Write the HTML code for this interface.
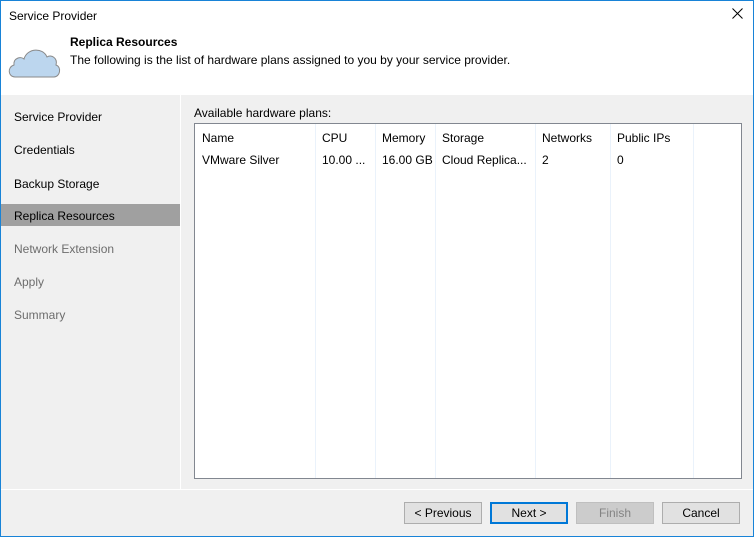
<!DOCTYPE html>
<html><head><style>
body{margin:0;width:754px;height:537px;overflow:hidden;font-family:"Liberation Sans",sans-serif;font-size:12px;color:#000;}
.win{position:absolute;left:0;top:0;width:752px;height:535px;border:1px solid #1883d7;background:#f0f0f0;}
.abs{position:absolute;}
.nav{position:absolute;left:13px;font-size:12px;}
.btn{position:absolute;top:501px;height:20px;width:76px;border:1px solid #adadad;background:#e1e1e1;text-align:center;line-height:20px;font-size:12px;}
.col{position:absolute;top:123px;width:1px;height:354px;background:#eaf2fb;}
.th{position:absolute;top:130px;}
.td{position:absolute;top:152px;}
</style></head><body>
<div class="win">
<div class="abs" style="left:0;top:0;width:752px;height:94px;background:#fff"></div>
<div class="abs" style="left:8px;top:8px;">Service Provider</div>
<svg class="abs" style="left:731px;top:7px" width="11" height="11" viewBox="0 0 11 11"><path d="M0.5 0.5L10.5 10.5M10.5 0.5L0.5 10.5" stroke="#000" stroke-width="1"/></svg>
<svg class="abs" style="left:6px;top:44px" width="54" height="34" viewBox="0 0 54 34"><path d="M8 32 C1 32 0 22 7 20 C6 13 14 11 17 14 C20 3 36 2 40 12 C44 9 51 13 49 20 C55 22 53 32 47 32 Z" fill="#bcd6ee" stroke="#8a8a8a" stroke-width="1"/></svg>
<div class="abs" style="left:69px;top:34px;font-weight:bold;">Replica Resources</div>
<div class="abs" style="left:69px;top:52px;">The following is the list of hardware plans assigned to you by your service provider.</div>
<div class="abs" style="left:179px;top:94px;width:1px;height:394px;background:#fff"></div>
<div class="abs" style="left:0;top:203px;width:179px;height:22px;background:#a0a0a0"></div>
<div class="nav" style="top:109px">Service Provider</div>
<div class="nav" style="top:142px">Credentials</div>
<div class="nav" style="top:176px">Backup Storage</div>
<div class="nav" style="top:208px">Replica Resources</div>
<div class="nav" style="top:241px;color:#6d6d6d">Network Extension</div>
<div class="nav" style="top:274px;color:#6d6d6d">Apply</div>
<div class="nav" style="top:307px;color:#6d6d6d">Summary</div>
<div class="abs" style="left:193px;top:105px;">Available hardware plans:</div>
<div class="abs" style="left:193px;top:122px;width:546px;height:354px;background:#fff;border:1px solid #828790;"></div>
<div class="col" style="left:314px"></div><div class="col" style="left:374px"></div><div class="col" style="left:434px"></div><div class="col" style="left:534px"></div><div class="col" style="left:609px"></div><div class="col" style="left:692px"></div>
<div class="th" style="left:201px">Name</div><div class="th" style="left:321px">CPU</div><div class="th" style="left:381px">Memory</div><div class="th" style="left:441px">Storage</div><div class="th" style="left:541px">Networks</div><div class="th" style="left:616px">Public IPs</div>
<div class="td" style="left:201px">VMware Silver</div><div class="td" style="left:321px">10.00 ...</div><div class="td" style="left:381px">16.00 GB</div><div class="td" style="left:441px">Cloud Replica...</div><div class="td" style="left:541px">2</div><div class="td" style="left:616px">0</div>
<div class="abs" style="left:0;top:488px;width:752px;height:1px;background:#fff"></div>
<div class="btn" style="left:403px">&lt; Previous</div>
<div class="btn" style="left:489px;border:2px solid #0078d7;height:18px;width:74px;line-height:18px">Next &gt;</div>
<div class="btn" style="left:575px;background:#cccccc;border-color:#bfbfbf;color:#838383">Finish</div>
<div class="btn" style="left:661px">Cancel</div>
</div>
</body></html>
